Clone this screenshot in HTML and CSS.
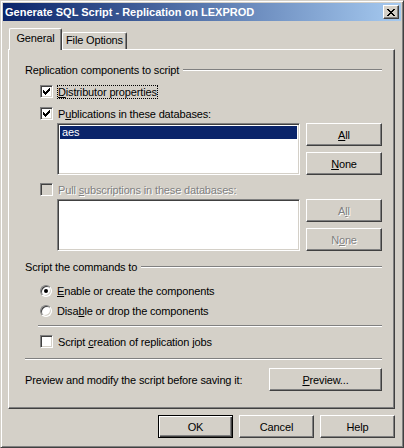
FILE: index.html
```html
<!DOCTYPE html>
<html lang="en">
<head>
    <meta charset="UTF-8" />
    <title>Generate SQL Script - Replication on LEXPROD</title>
    <link rel="stylesheet" href="styles.css">
</head>
<body>
    <div class="window">
        <div class="titlebar">
            <span class="title">Generate SQL Script - Replication on LEXPROD</span>
            <span class="close-btn">
                <svg width="8" height="7" viewBox="0 0 8 7" shape-rendering="crispEdges">
                    <path d="M0 0h2v1h-2zM6 0h2v1h-2zM1 1h2v1h-2zM5 1h2v1h-2zM2 2h4v1h-4zM3 3h2v1h-2zM2 4h4v1h-4zM1 5h2v1h-2zM5 5h2v1h-2zM0 6h2v1h-2zM6 6h2v1h-2z" fill="#000"/>
                </svg>
            </span>
        </div>

        <div class="main">
            <div class="tabs">
                <div class="tab active">General</div>
                <div class="tab">File Options</div>
            </div>

            <div class="panel">
                <div class="group-title">
                    <span>Replication components to script</span>
                    <span class="etch"></span>
                </div>

                <div class="check row-dist">
                    <span class="box checked"></span>
                    <span class="label focus"><u>D</u>istributor properties</span>
                </div>
                <div class="check row-pub">
                    <span class="box checked"></span>
                    <span class="label">P<u>u</u>blications in these databases:</span>
                </div>

                <div class="list-row row-list1">
                    <div class="listbox">
                        <div class="list-item selected">aes</div>
                    </div>
                    <div class="list-buttons">
                        <button class="btn"><u>A</u>ll</button>
                        <button class="btn"><u>N</u>one</button>
                    </div>
                </div>

                <div class="check row-pull disabled">
                    <span class="box"></span>
                    <span class="label">Pull <u>s</u>ubscriptions in these databases:</span>
                </div>

                <div class="list-row row-list2">
                    <div class="listbox"></div>
                    <div class="list-buttons">
                        <button class="btn" disabled>A<u>l</u>l</button>
                        <button class="btn" disabled>N<u>o</u>ne</button>
                    </div>
                </div>

                <div class="group-title row-group2">
                    <span>Script the commands to</span>
                    <span class="etch"></span>
                </div>

                <div class="radio row-radio1">
                    <span class="dot on"></span>
                    <span class="label"><u>E</u>nable or create the components</span>
                </div>
                <div class="radio row-radio2">
                    <span class="dot"></span>
                    <span class="label">Disa<u>b</u>le or drop the components</span>
                </div>

                <div class="separator sep-indent"></div>

                <div class="check row-jobs">
                    <span class="box"></span>
                    <span class="label">Script <u>c</u>reation of replication jobs</span>
                </div>

                <div class="separator sep-full"></div>

                <div class="preview-row">
                    <span>Preview and modify the script before saving it:</span>
                    <button class="btn btn-preview"><u>P</u>review...</button>
                </div>
            </div>

            <div class="dialog-buttons">
                <button class="btn default">OK</button>
                <button class="btn">Cancel</button>
                <button class="btn">Help</button>
            </div>
        </div>
    </div>
</body>
</html>
```

FILE: styles.css
```css
body {
    margin: 0;
    font-family: 'Liberation Sans', Arial, sans-serif;
    font-size: 11px;
    letter-spacing: -0.15px;
    color: #000;
}
.window {
    width: 404px;
    height: 448px;
    box-sizing: border-box;
    background: #d4d0c8;
    border: 1px solid;
    border-color: #d4d0c8 #404040 #404040 #d4d0c8;
    box-shadow: inset 1px 1px #fff, inset -1px -1px #808080;
    padding: 2px;
}
.titlebar {
    height: 18px;
    display: flex;
    align-items: center;
    justify-content: space-between;
    padding: 0 2px;
    background: linear-gradient(to right, #0a246a, #a6caf0);
    color: #fff;
    font-weight: 700;
    letter-spacing: 0;
}
.close-btn {
    width: 16px;
    height: 14px;
    box-sizing: border-box;
    display: flex;
    align-items: center;
    justify-content: center;
    background: #d4d0c8;
    border: 1px solid;
    border-color: #fff #404040 #404040 #fff;
    box-shadow: inset -1px -1px #808080;
}
.main {
    padding: 7px 6px 0 5px;
}
.tabs {
    display: flex;
    align-items: flex-end;
    height: 21px;
    padding-left: 1px;
}
.tab {
    box-sizing: border-box;
    height: 17px;
    width: 65px;
    line-height: 15px;
    text-align: center;
    border: 1px solid;
    border-bottom: none;
    border-color: #fff #404040 #404040 #fff;
    border-radius: 2px 2px 0 0;
    box-shadow: inset -1px 0 #808080;
    background: #d4d0c8;
}
.tab.active {
    position: relative;
    z-index: 1;
    width: 53px;
    height: 22px;
    line-height: 18px;
    margin-bottom: -1px;
}
.panel {
    height: 360px;
    box-sizing: border-box;
    border: 1px solid;
    border-color: #fff #404040 #404040 #fff;
    box-shadow: inset -1px -1px #808080;
    padding: 13px 12px 0 16px;
}
.group-title {
    display: flex;
    align-items: center;
    height: 13px;
}
.etch {
    flex: 1;
    border-top: 1px solid #808080;
    border-bottom: 1px solid #fff;
    margin-left: 4px;
}
.check, .radio {
    display: flex;
    align-items: center;
    height: 13px;
    margin-left: 15px;
}
.box {
    width: 13px;
    height: 13px;
    box-sizing: border-box;
    margin-right: 4px;
    background: #fff;
    border: 1px solid;
    border-color: #808080 #fff #fff #808080;
    box-shadow: inset 1px 1px #404040, inset -1px -1px #d4d0c8;
}
.box.checked {
    background: #fff url("data:image/svg+xml,%3Csvg xmlns='http://www.w3.org/2000/svg' width='7' height='7' shape-rendering='crispEdges'%3E%3Cpath d='M6 0h1v3h-1zM5 1h1v3h-1zM4 2h1v3h-1zM0 2h1v3h-1zM1 3h1v3h-1zM2 4h1v3h-1zM3 3h1v3h-1z'/%3E%3C/svg%3E") no-repeat 2px 2px;
}
.disabled .box {
    background: #d4d0c8;
}
.disabled .label {
    color: #808080;
    text-shadow: 1px 1px #fff;
}
.label {
    border: 1px solid transparent;
    line-height: 12px;
}
.label.focus {
    border: 1px dotted #000;
}
.dot {
    position: relative;
    width: 12px;
    height: 12px;
    box-sizing: border-box;
    margin-right: 4px;
    border-radius: 50%;
    background: #fff;
    border: 1px solid;
    border-color: #808080 #fff #fff #808080;
    box-shadow: inset 1px 1px #404040, inset -1px -1px #d4d0c8;
}
.dot.on::after {
    content: '';
    position: absolute;
    left: 3px;
    top: 3px;
    width: 4px;
    height: 4px;
    border-radius: 50%;
    background: #000;
}
.list-row {
    display: flex;
    gap: 6px;
    margin-left: 32px;
}
.listbox {
    width: 243px;
    height: 52px;
    box-sizing: border-box;
    background: #fff;
    border: 1px solid;
    border-color: #808080 #fff #fff #808080;
    box-shadow: inset 1px 1px #404040, inset -1px -1px #d4d0c8;
    padding: 2px 2px 0 2px;
}
.list-item {
    height: 13px;
    line-height: 13px;
    padding-left: 2px;
}
.list-item.selected {
    background: #0a246a;
    color: #fff;
}
.list-buttons {
    display: flex;
    flex-direction: column;
    gap: 6px;
    width: 76px;
}
.btn {
    height: 23px;
    box-sizing: border-box;
    padding: 0;
    font: inherit;
    letter-spacing: inherit;
    color: #000;
    background: #d4d0c8;
    border: 1px solid;
    border-color: #fff #404040 #404040 #fff;
    box-shadow: inset -1px -1px #808080;
    border-radius: 0;
}
.btn:disabled {
    color: #808080;
    text-shadow: 1px 1px #fff;
}
.btn.default {
    border-color: #000;
    box-shadow: inset 1px 1px #fff, inset -1px -1px #404040, inset -2px -2px #808080;
}
.separator {
    border-top: 1px solid #808080;
    border-bottom: 1px solid #fff;
}
.sep-indent {
    margin-left: 13px;
}
.row-dist { margin-top: 9px; }
.row-pub { margin-top: 9px; }
.row-list1 { margin-top: 3px; }
.row-pull { margin-top: 8px; }
.row-list2 { margin-top: 3px; }
.row-group2 { margin-top: 9px; }
.row-radio1 { margin-top: 11px; }
.row-radio2 { margin-top: 7px; }
.sep-indent { margin-top: 8px; }
.row-jobs { margin-top: 8px; }
.sep-full { margin-top: 10px; }
.preview-row {
    display: flex;
    align-items: center;
    justify-content: space-between;
    margin-top: 8px;
}
.btn-preview {
    width: 113px;
}
.dialog-buttons {
    display: flex;
    justify-content: flex-end;
    gap: 6px;
    margin-top: 6px;
}
.dialog-buttons .btn {
    width: 75px;
}
```
